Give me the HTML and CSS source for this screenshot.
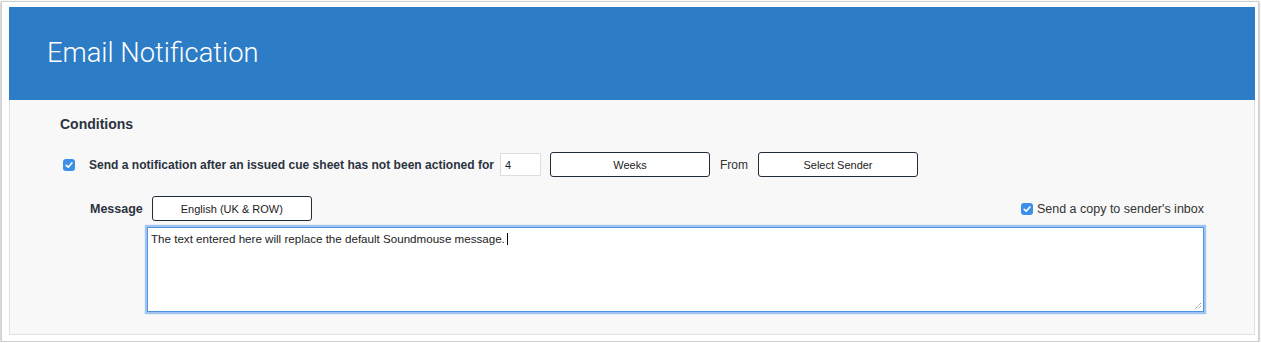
FILE: index.html
```html
<!DOCTYPE html>
<html lang="en">
<head>
    <meta charset="UTF-8">
    <title>Email Notification</title>
    <link rel="stylesheet" href="styles.css">
</head>
<body>
    <div class="frame">
        <div class="panel">
            <div class="panel-header">
                <h1>Email Notification</h1>
            </div>
            <div class="panel-body">
                <h2>Conditions</h2>

                <div class="row condition-row">
                    <span class="check">
                        <svg viewBox="0 0 12 12" width="12" height="12"><path d="M3.2 6.3 L5.2 8.2 L8.9 3.9" fill="none" stroke="#fff" stroke-width="1.6" stroke-linecap="round" stroke-linejoin="round"/></svg>
                    </span>
                    <span class="label-strong">Send a notification after an issued cue sheet has not been actioned for</span>
                    <input type="text" class="num-input" value="4">
                    <button class="select-btn">Weeks</button>
                    <span class="label">From</span>
                    <button class="select-btn">Select Sender</button>
                </div>

                <div class="row message-row">
                    <span class="label-strong">Message</span>
                    <button class="select-btn">English (UK &amp; ROW)</button>
                    <label class="copy-option">
                        <span class="check">
                            <svg viewBox="0 0 12 12" width="12" height="12"><path d="M3.2 6.3 L5.2 8.2 L8.9 3.9" fill="none" stroke="#fff" stroke-width="1.6" stroke-linecap="round" stroke-linejoin="round"/></svg>
                        </span>
                        Send a copy to sender's inbox
                    </label>
                </div>

                <div class="editor">
                    The text entered here will replace the default Soundmouse message.<span class="caret"></span>
                    <svg class="grip" viewBox="0 0 10 10" width="10" height="10"><path d="M9 3 L3 9 M9 6 L6 9" stroke="#777" stroke-width="1" stroke-dasharray="1 1"/></svg>
                </div>
            </div>
        </div>
    </div>
</body>
</html>
```

FILE: styles.css
```css
body {
    margin: 0;
    background-color: #fff;
    font-family: "Liberation Sans", Arial, sans-serif;
    color: #2b3340;
}
.frame {
    width: 1246px;
    margin: 1px 0 0 1px;
    padding: 5px 3px 6px 7px;
    border: 1px solid #cfcfcf;
    background-color: #fff;
    box-shadow: 0 1px 2px rgba(0, 0, 0, 0.45);
}
.panel-header {
    height: 93px;
    background-color: #2c7cc6;
    display: flex;
    align-items: center;
    padding-left: 38px;
}
.panel-header h1 {
    margin: 0 0 2px 0;
    font-family: Roboto, "Liberation Sans", sans-serif;
    font-weight: 300;
    font-size: 27.3px;
    color: #fff;
}
.panel-body {
    height: 234px;
    background-color: #f8f8f8;
    border: 1px solid #e0e0e0;
    border-top: none;
    padding: 0 50px;
}
h2 {
    margin: 0;
    padding-top: 16px;
    font-size: 14px;
    font-weight: bold;
    line-height: 17px;
}
.row {
    display: flex;
    align-items: center;
}
.condition-row {
    margin-top: 19px;
    height: 25px;
}
.check {
    width: 12px;
    height: 12px;
    border-radius: 3px;
    background-color: #3b8fe9;
    display: inline-flex;
}
.condition-row .check {
    margin: 0 14px 0 3px;
}
.label-strong {
    font-size: 12.5px;
    font-weight: bold;
}
.condition-row .label-strong {
    font-size: 12.05px;
}
.label {
    font-size: 12px;
    margin: 0 10px;
    color: #333;
}
.num-input {
    width: 31px;
    height: 21px;
    margin: 0 9px 0 6px;
    padding: 0 4px;
    border: 1px solid #ddd;
    background-color: #fff;
    font-family: "Liberation Sans", Arial, sans-serif;
    font-size: 11px;
    color: #222;
}
.select-btn {
    width: 160px;
    height: 25px;
    border: 1px solid #1f2b3a;
    border-radius: 3px;
    background-color: #fff;
    font-family: "Liberation Sans", Arial, sans-serif;
    font-size: 11px;
    color: #222;
}
.message-row {
    margin-top: 19px;
    height: 25px;
    padding-left: 30px;
}
.message-row .label-strong {
    margin-right: 9px;
}
.copy-option {
    margin-left: auto;
    display: flex;
    align-items: center;
    gap: 4px;
    font-size: 12.5px;
    color: #333;
}
.editor {
    position: relative;
    margin: 6px 0 0 87px;
    height: 78px;
    padding: 3px 3px 2px 3px;
    background-color: #fff;
    border: 1px solid #4f94de;
    box-shadow: 0 0 1px 2px #9fc4f1;
    font-size: 11.6px;
    line-height: 15px;
    color: #222;
}
.caret {
    display: inline-block;
    width: 1px;
    height: 12px;
    margin-left: 2px;
    vertical-align: -2px;
    background-color: #000;
}
.grip {
    position: absolute;
    right: 1px;
    bottom: 1px;
}
```
